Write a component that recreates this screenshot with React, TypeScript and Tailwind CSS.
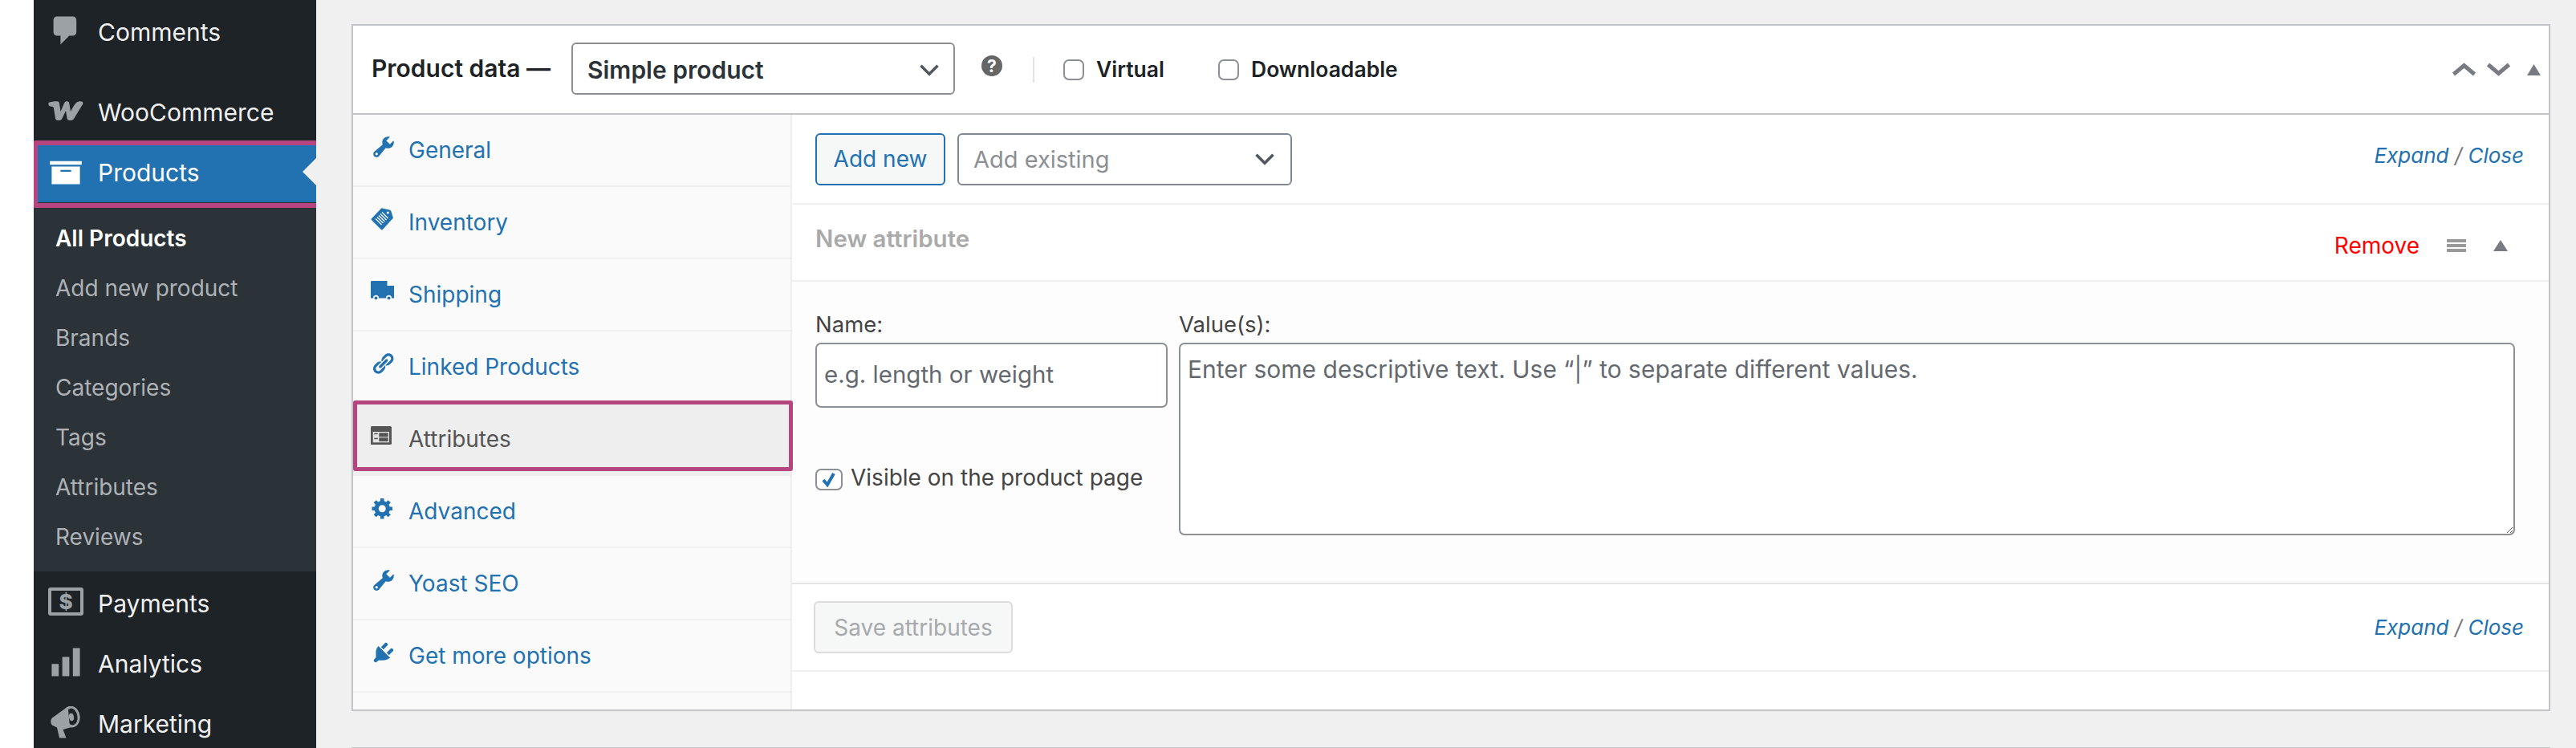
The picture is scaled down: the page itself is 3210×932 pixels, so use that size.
import React from "react";

const font = { fontFamily: "Inter, 'Liberation Sans', sans-serif" };

function Dash({ d, size, className }: { d: string; size: number; className?: string }) {
  return (
    <svg viewBox="0 0 20 20" width={size} height={size} className={className} fill="currentColor">
      <path d={d} />
    </svg>
  );
}

const P = {
  comments: "M5 2h9c1.1 0 2 .9 2 2v7c0 1.1-.9 2-2 2h-2l-5 5v-5H5c-1.1 0-2-.9-2-2V4c0-1.1.9-2 2-2z",
  archive: "M19 4v2H1V4h18zM2 7h16v10H2V7zm11 3V9H7v1h6z",
  chart: "M18 18V2h-4v16h4zm-6 0V7H8v11h4zm-6 0v-7H2v7h4z",
  tools:
    "M16.68 9.77c-1.34 1.34-3.3 1.67-4.95.99l-5.41 6.52c-.99.99-2.59.99-3.58 0s-.99-2.59 0-3.58l6.52-5.42c-.68-1.65-.35-3.61.99-4.95 1.28-1.28 3.12-1.62 4.72-1.06l-2.89 2.89 2.82 2.82 2.86-2.87c.53 1.58.18 3.39-1.08 4.66zM3.81 16.21c.4.39 1.04.39 1.43 0 .4-.4.4-1.04 0-1.43-.39-.4-1.03-.4-1.43 0-.39.39-.39 1.03 0 1.43z",
  links:
    "M17.74 2.76c1.68 1.69 1.68 4.41 0 6.1l-1.53 1.52c-1.12 1.12-2.7 1.47-4.14 1.09l2.62-2.61.76-.77.76-.76c.84-.84.84-2.2 0-3.04-.84-.85-2.2-.85-3.04 0l-.77.76-3.38 3.38c-.37-1.44-.02-3.02 1.1-4.14l1.52-1.53c1.69-1.68 4.42-1.68 6.1 0zM8.59 13.43l5.34-5.34c.42-.42.42-1.1 0-1.52-.44-.43-1.13-.39-1.53 0l-5.33 5.34c-.42.42-.42 1.1 0 1.52.44.43 1.13.39 1.52 0zm-.76 2.29l4.14-4.15c.38 1.44.03 3.02-1.09 4.14l-1.52 1.53c-1.69 1.68-4.41 1.68-6.1 0-1.68-1.68-1.68-4.42 0-6.1l1.53-1.52c1.12-1.12 2.7-1.47 4.14-1.1l-4.14 4.15c-.85.84-.85 2.2 0 3.05.84.84 2.2.84 3.04 0z",
  gear:
    "M18 12h-2.18c-.17.7-.44 1.35-.81 1.93l1.54 1.54-2.1 2.1-1.54-1.54c-.58.36-1.23.63-1.91.79V19H8v-2.18c-.68-.16-1.33-.43-1.91-.79l-1.54 1.54-2.12-2.12 1.54-1.54c-.36-.58-.63-1.23-.79-1.91H1V9.03h2.17c.16-.7.44-1.35.8-1.94L2.43 5.55l2.1-2.1 1.54 1.54c.58-.37 1.24-.64 1.93-.81V2h3v2.18c.68.16 1.33.43 1.91.79l1.54-1.54 2.12 2.12-1.54 1.54c.36.59.64 1.24.8 1.94H18V12zm-8.5 1.5c1.66 0 3-1.34 3-3s-1.34-3-3-3-3 1.34-3 3 1.34 3 3 3z",
  plug:
    "M13.11 4.36L9.87 7.6 8 5.73l3.24-3.24c.35-.34 1.05-.2 1.56.32.52.51.66 1.21.31 1.55zm-8 1.77l.91-1.12 9.01 9.01-1.19.84c-.71.71-2.63 1.16-3.82 1.16H6.14L4.9 17.26c-.59.59-1.54.59-2.12 0-.59-.58-.59-1.53 0-2.12l1.24-1.24v-3.88c0-1.13.4-3.19 1.09-3.89zm7.26 3.97l3.24-3.24c.34-.35 1.04-.21 1.55.31.52.51.66 1.21.31 1.55l-3.24 3.25z",
};

function WooIcon() {
  return (
    <svg viewBox="0 0 44 24" width={44} height={24} fill="currentColor">
      <path d="M1.500 1.500C5 .5 9 .2 11 .3c2 .1 2.800 1.200 3 2.700l1.500 10L20 2.500C20.800.8 22 .3 23.500.3c1.700 0 2.500 1 2.800 2.700L28 13c2-4 4.500-8.500 7-11 1.500-1.400 3.500-1.800 6-1.700 2 .1 3 1.700 2 3.700L32 22c-1 1.500-2.500 2-4 2h-1.500c-1.700 0-2.500-1-2.900-2.500L22 12l-4.500 9.500c-.8 1.700-2 2.500-3.500 2.500h-2c-1.700 0-2.700-1-3-2.500L7 9c-.2-1.500-1-2-2.500-2.200l-2-.3C.3 6.200-.5 2.500 1.500 1.500z" />
    </svg>
  );
}

function PaymentsIcon() {
  return (
    <div className="w-[44px] h-[35px] box-border border-[4px] border-[#9ca1a5] rounded-[3px] flex items-center justify-center text-[26px] leading-none font-extrabold text-[#9ca1a5]">
      $
    </div>
  );
}

function MegaphoneIcon() {
  return (
    <svg viewBox="0 0 38 40" width={38} height={40}>
      <path fill="#9ca1a5" d="M20 1.500 2 14.500C-.5 17-.2 21.500 2 23.500l6 3 3 13h8.500l-4-10.500L26 26z" />
      <ellipse cx="26" cy="13" rx="10.500" ry="13.500" fill="#9ca1a5" transform="rotate(-10 26 13)" />
      <ellipse cx="26.500" cy="13" rx="7" ry="10.500" fill="#1d2327" transform="rotate(-10 26.500 13)" />
      <ellipse cx="26" cy="13.500" rx="3" ry="4.700" fill="#9ca1a5" transform="rotate(-10 26 13.500)" />
      <path fill="#9ca1a5" d="M19 3 15 12l5 13 4 1-2-22z" />
    </svg>
  );
}

function InventoryIcon() {
  return (
    <svg viewBox="0 0 28 28" width={28} height={28}>
      <path fill="#2271b1" d="M.8 13.500 13 .8c.4-.4.8-.5 1.300-.4l9 2c1.200.3 1.900 1 2.200 2.100L27.800 12c.1.500 0 .9-.4 1.300L14.600 27.200c-.4.400-1 .4-1.400 0L.8 14.900c-.4-.4-.4-1 0-1.400z" />
      <path stroke="#fafafa" strokeWidth="1.200" fill="none" d="M6 13.500 13.500 21M8 11.500 15.500 19M10 9.500 17.500 17M12 7.500 19.500 15M14 5.500 21.500 13" />
      <circle cx="21.300" cy="6" r="1.600" fill="#fafafa" />
    </svg>
  );
}

function TruckIcon() {
  return (
    <svg viewBox="0 0 29 25" width={29} height={25}>
      <path fill="#2271b1" d="M1.500 0H20.500v6H29v15.500H0V1.500C0 .6.600 0 1.500 0z" />
      <circle cx="6.500" cy="21.300" r="3.500" fill="#fafafa" />
      <circle cx="6.500" cy="21.300" r="1.900" fill="#2271b1" />
      <circle cx="22.500" cy="21.300" r="3.500" fill="#fafafa" />
      <circle cx="22.500" cy="21.300" r="1.900" fill="#2271b1" />
    </svg>
  );
}

function AttributesIcon() {
  return (
    <svg viewBox="0 0 26 23" width={26} height={23}>
      <rect width="26" height="23" rx="1.500" fill="#555" />
      <rect x="2.700" y="7" width="20.300" height="13.300" fill="#e4e4e4" />
      <rect x="10.300" y="8.300" width="11.400" height="5" fill="#555" />
      <rect x="10.300" y="14.300" width="11.400" height="4.700" fill="#555" />
      <rect x="4.300" y="8.700" width="4.400" height="1.500" fill="#555" />
      <rect x="4.300" y="14.700" width="4.400" height="1.500" fill="#555" />
    </svg>
  );
}

function SmallChevron() {
  return (
    <svg width={24} height={15} viewBox="0 0 24 15" fill="none">
      <path d="M1.500 1.800 12 12.300 22.500 1.800" stroke="#50575e" strokeWidth={3.500} />
    </svg>
  );
}

function BigChevron({ up = false }: { up?: boolean }) {
  return (
    <svg width={31} height={17} viewBox="0 0 31 17" fill="none">
      <path d={up ? "M2.500 14.500 15.500 3.500 28.500 14.500" : "M2.500 2.500 15.500 13.500 28.500 2.500"} stroke="#787c82" strokeWidth={5} />
    </svg>
  );
}

function Tri({ w, h }: { w: number; h: number }) {
  return (
    <svg width={w} height={h} viewBox={`0 0 ${w} ${h}`}>
      <path d={`M0 ${h}L${w / 2} 0L${w} ${h}z`} fill="#787c82" />
    </svg>
  );
}

function MenuItem({ icon, label, className = "" }: { icon: React.ReactNode; label: string; className?: string }) {
  return (
    <div className={`flex items-center h-[75px] ${className}`}>
      <div className="w-[80px] flex items-center justify-center pb-[4px] text-[#9ca1a5]">{icon}</div>
      <span className="text-[30px] text-[#f0f0f1] leading-none">{label}</span>
    </div>
  );
}

const subItems = ["Add new product", "Brands", "Categories", "Tags", "Attributes", "Reviews"];

function Sidebar() {
  return (
    <div className="w-[352px] h-full bg-[#1d2327] overflow-hidden shrink-0">
      <div className="pt-[2px]">
        <MenuItem icon={<Dash d={P.comments} size={44} />} label="Comments" />
      </div>
      <div className="mt-[25px]">
        <MenuItem icon={<WooIcon />} label="WooCommerce" />
      </div>
      <div className="relative h-[75px] bg-[#2271b1] flex items-center">
        <div className="w-[80px] flex items-center justify-center pb-[2px] text-white">
          <Dash d={P.archive} size={44} />
        </div>
        <span className="text-[30px] text-white leading-none">Products</span>
        <div className="absolute right-0 top-[20px] w-0 h-0 border-y-[17.5px] border-y-transparent border-r-[17px] border-r-[#f0f0f1]" />
        <div className="absolute -top-[2px] -bottom-[7px] -left-[1px] -right-[7px] border-[6px] border-[#b5457f] rounded-[3px]" />
      </div>
      <div className="bg-[#2c3338] pt-[14px] pb-[12px]">
        <div className="h-[62px] pl-[27px] flex items-center text-[28px] font-semibold text-white">All Products</div>
        {subItems.map((s) => (
          <div key={s} className="h-[62px] pl-[27px] flex items-center text-[28px] text-[#aeb2b6]">
            {s}
          </div>
        ))}
      </div>
      <div className="pt-[2px]">
        <MenuItem icon={<PaymentsIcon />} label="Payments" />
        <MenuItem icon={<Dash d={P.chart} size={44} />} label="Analytics" />
        <MenuItem icon={<MegaphoneIcon />} label="Marketing" />
      </div>
    </div>
  );
}

const tabs: { label: string; icon: React.ReactNode }[] = [
  { label: "General", icon: <Dash d={P.tools} size={32} /> },
  { label: "Inventory", icon: <InventoryIcon /> },
  { label: "Shipping", icon: <TruckIcon /> },
  { label: "Linked Products", icon: <Dash d={P.links} size={30} /> },
  { label: "Attributes", icon: <AttributesIcon /> },
  { label: "Advanced", icon: <Dash d={P.gear} size={30} /> },
  { label: "Yoast SEO", icon: <Dash d={P.tools} size={32} /> },
  { label: "Get more options", icon: <Dash d={P.plug} size={32} /> },
];

function Tabs() {
  return (
    <div className="w-[547px] shrink-0 bg-[#fafafa] border-r-2 border-[#eeeeee]">
      {tabs.map((t) => {
        const active = t.label === "Attributes";
        return (
          <div
            key={t.label}
            className={`relative h-[90px] box-border border-b-2 border-[#f0f0f0] flex items-center ${active ? "bg-[#eeeeee] text-[#555555]" : "text-[#2271b1]"}`}
          >
            <div className="w-[69px] pl-[22px] box-border flex items-center justify-start mb-[9px] text-[#2271b1]">{t.icon}</div>
            <span className="text-[28px] leading-none">{t.label}</span>
            {active && <div className="absolute -top-[4px] bottom-[4px] left-0 -right-[3px] border-[5px] border-[#b5457f] rounded-[3px]" />}
          </div>
        );
      })}
    </div>
  );
}

function ExpandClose() {
  return (
    <div className="text-[26px] italic leading-none">
      <span className="text-[#2271b1]">Expand</span>
      <span className="text-[#777]"> / </span>
      <span className="text-[#2271b1]">Close</span>
    </div>
  );
}

function Checkbox({ className = "", children }: { className?: string; children?: React.ReactNode }) {
  return <div className={`box-border border-2 border-[#8c8f94] rounded-[7px] bg-white shrink-0 flex items-center justify-center ${className}`}>{children}</div>;
}

function Header() {
  return (
    <div className="h-[111px] box-border border-b-2 border-[#c3c4c7] flex items-center pl-[23px] pr-[10px] shrink-0">
      <span className="text-[30px] font-semibold text-[#1d2327] leading-none w-[249px] shrink-0 mb-[3px] whitespace-nowrap">Product data —</span>
      <div className="w-[478px] h-[65px] box-border border-2 border-[#8c8f94] rounded-[6px] flex items-center justify-between pl-[18px] pr-[18px] mb-[2px]">
        <span className="text-[30px] font-semibold text-[#2c3338] leading-none mt-[3px]">Simple product</span>
        <div className="mt-[3px]">
          <SmallChevron />
        </div>
      </div>
      <div className="ml-[33px] w-[26px] h-[26px] rounded-full bg-[#666] text-white text-[21px] font-bold leading-none flex items-center justify-center mb-[9px]">?</div>
      <div className="ml-[38px] w-[2px] h-[32px] bg-[#e2e2e2]" />
      <Checkbox className="ml-[36px] w-[26px] h-[26px]" />
      <span className="ml-[15px] w-[85px] text-[26.500px] font-semibold text-[#1d2327] leading-none">Virtual</span>
      <Checkbox className="ml-[67px] w-[26px] h-[26px]" />
      <span className="ml-[15px] text-[26.500px] font-semibold text-[#1d2327] leading-none">Downloadable</span>
      <div className="ml-auto flex items-center">
        <BigChevron up />
        <div className="w-[12px]" />
        <BigChevron />
        <div className="w-[20px]" />
        <Tri w={17} h={14} />
      </div>
    </div>
  );
}

function Content() {
  return (
    <div className="flex-1 min-w-0 flex flex-col">
      <div className="h-[112px] box-border border-b-2 border-[#f0f0f0] flex items-center pl-[29px] pr-[31px] shrink-0">
        <div className="w-[162px] h-[65px] box-border border-2 border-[#2271b1] rounded-[6px] bg-[#f6f7f7] flex items-center justify-center text-[28px] text-[#2271b1] leading-none">Add new</div>
        <div className="ml-[15px] w-[417px] h-[65px] box-border border-2 border-[#7e8993] rounded-[6px] flex items-center justify-between pl-[18px] pr-[20px]">
          <span className="text-[29px] text-[#8c8f94] leading-none">Add existing</span>
          <SmallChevron />
        </div>
        <div className="ml-auto mt-[-8px]">
          <ExpandClose />
        </div>
      </div>
      <div className="h-[96px] box-border border-b-2 border-[#f0f0f0] flex items-center pl-[29px] shrink-0">
        <span className="text-[29.500px] font-semibold text-[#aaaaaa] leading-none mb-[8px]">New attribute</span>
        <div className="ml-auto flex items-center pr-[51px] mt-[8px]">
          <span className="text-[28px] text-[#ff0000] leading-none">Remove</span>
          <div className="ml-[34px] w-[24px] flex flex-col gap-[2px]">
            <div className="h-[4px] bg-[#999]" />
            <div className="h-[4px] bg-[#999]" />
            <div className="h-[4px] bg-[#999]" />
          </div>
          <div className="ml-[34px]">
            <Tri w={18} h={14} />
          </div>
        </div>
      </div>
      <div className="h-[377px] box-border border-b-2 border-[#e5e5e5] bg-[#fdfdfd] flex pl-[29px] pr-[42px] pt-[36px] shrink-0">
        <div className="w-[439px] shrink-0">
          <div className="text-[27.500px] text-[#444] leading-[34px] mb-[6px]">Name:</div>
          <input
            placeholder="e.g. length or weight"
            className="block w-full h-[81px] box-border border-2 border-[#8c8f94] rounded-[7px] bg-white pl-[9px] pb-[3px] text-[29.500px] outline-none placeholder:text-[#646970]"
            style={font}
          />
          <div className="flex items-center mt-[70px] h-[34px]">
            <Checkbox className="w-[34px] h-[27px] mt-[4px]">
              <svg width={20} height={19} viewBox="0 0 20 19" fill="none">
                <path d="M3 10l5 6L16 2" stroke="#2271b1" strokeWidth={4} />
              </svg>
            </Checkbox>
            <span className="ml-[10px] text-[28px] text-[#444] leading-none whitespace-nowrap">Visible on the product page</span>
          </div>
        </div>
        <div className="flex-1 min-w-0 ml-[14px]">
          <div className="text-[27.500px] text-[#444] leading-[34px] mb-[6px]">Value(s):</div>
          <textarea
            placeholder="Enter some descriptive text. Use “|” to separate different values."
            className="block w-full h-[240px] box-border border-2 border-[#8c8f94] rounded-[7px] bg-white pl-[9px] pt-[13px] text-[30px] leading-[36px] outline-none resize placeholder:text-[#646970]"
            style={font}
          />
        </div>
      </div>
      <div className="h-[109px] box-border border-b-2 border-[#f0f0f0] flex items-center pl-[27px] pr-[31px] shrink-0">
        <div className="w-[248px] h-[65px] box-border border-2 border-[#dcdcde] rounded-[6px] bg-[#f6f7f7] flex items-center justify-center text-[28px] text-[#a7aaad] leading-none">Save attributes</div>
        <div className="ml-auto">
          <ExpandClose />
        </div>
      </div>
    </div>
  );
}

export default function App() {
  return (
    <div className="w-[3210px] h-[932px] flex bg-white overflow-hidden" style={font}>
      <div className="w-[42px] shrink-0 bg-white" />
      <Sidebar />
      <div className="flex-1 min-w-0 bg-[#f0f0f0] pt-[30px] pl-[44px] pr-[32px]">
        <div className="h-[856px] box-border border-2 border-[#c3c4c7] bg-white flex flex-col">
          <Header />
          <div className="flex flex-1 min-h-0">
            <Tabs />
            <Content />
          </div>
        </div>
        <div className="mt-[45px] h-px bg-[#c3c4c7]" />
      </div>
    </div>
  );
}
